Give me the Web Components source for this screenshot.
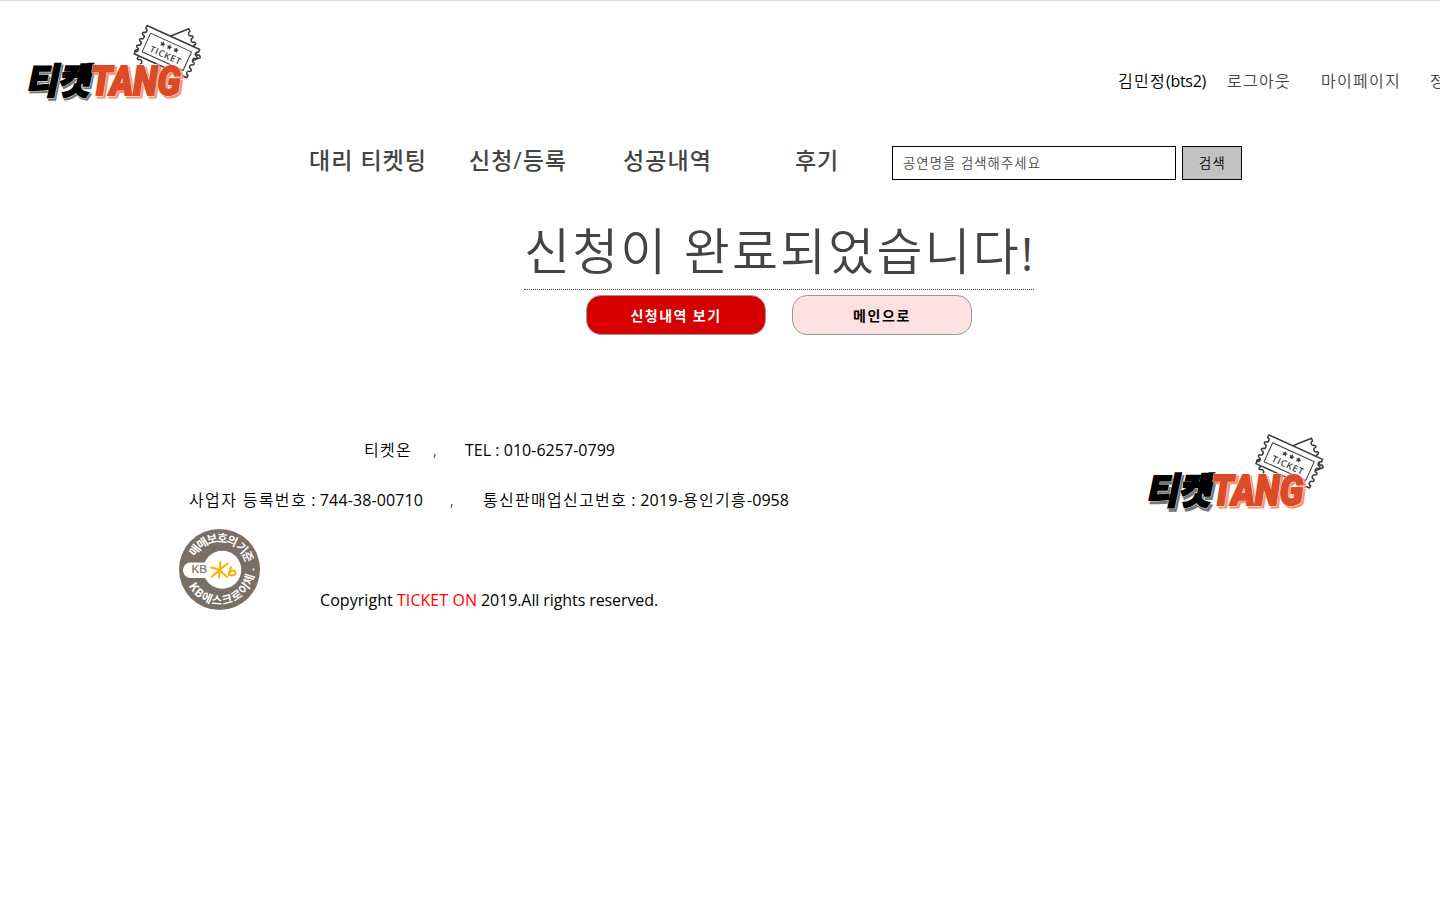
<!DOCTYPE html>
<html lang="ko"><head><meta charset="utf-8"><title>티켓TANG</title>
<style>
html,body{margin:0;background:#fff}
body{font-family:"Open Sans","Noto Sans CJK KR",sans-serif;height:898px;overflow:hidden}
</style></head><body>
<ticket-page></ticket-page>
<script>
const define=(name,html,setup)=>customElements.define(name,class extends HTMLElement{
  connectedCallback(){
    if(this.shadowRoot)return;
    const t=document.createElement('template');t.innerHTML=html;
    this.attachShadow({mode:'open'}).append(t.content.cloneNode(true));
    if(setup)setup(this);
  }
});

/* A line of text whose tracking is adjusted to fill the width in "w". */
define('text-run',`<style>:host{display:block;white-space:pre;line-height:24px;font-size:16px}span{display:inline-block}</style><span><slot></slot></span>`,el=>{
  const w=+el.getAttribute('w'),s=el.shadowRoot.querySelector('span');
  el.style.width=w+'px';
  s.style.letterSpacing=((w-s.getBoundingClientRect().width)/el.textContent.length)+'px';
});

define('tang-logo',`<style>:host{display:block;width:190px;height:95px}svg{display:block;width:100%;height:100%;overflow:visible}
.k{font:900 36px "Noto Sans CJK KR",sans-serif}.t{font:italic 900 41px Roboto,sans-serif}.s{font:600 9px "Open Sans",sans-serif}</style>
<svg viewBox="0 0 190 95">
<defs><path id="tk" d="M0 0H58V3a2.2 2.2 0 0 0 0 4.4q2 1.3 0 2.6a2.2 2.2 0 0 0 0 4.4q2 1.3 0 2.6a2.2 2.2 0 0 0 0 4.4q2 1.3 0 2.6a2.2 2.2 0 0 0 0 4.4V31H0V28.4a2.2 2.2 0 0 0 0-4.4q-2-1.3 0-2.6a2.2 2.2 0 0 0 0-4.4q-2-1.3 0-2.6a2.2 2.2 0 0 0 0-4.4q-2-1.3 0-2.6a2.2 2.2 0 0 0 0-4.4z"/></defs>
<g fill="#fff" stroke="#3b3b3b" stroke-width="1.5" stroke-linejoin="round">
<use href="#tk" transform="translate(115 35.5) rotate(-22)"/>
<g transform="translate(127 10.5) rotate(24.5)"><use href="#tk"/><path d="M6.5 5.5H51.5V26H6.5z" fill="none" stroke-width="1"/></g>
</g>
<g fill="#3b3b3b" transform="translate(127 10.5) rotate(24.5)"><text class="s" x="12.5" y="22.5" textLength="33">TICKET</text>
<path id="st" d="M22 7.600l.9 1.700 1.900.2-1.400 1.300.4 1.900-1.800-.9-1.800.9.4-1.900-1.400-1.300 1.900-.2z"/><use href="#st" x="7.300"/><use href="#st" x="14.600"/></g>
<g transform="translate(5.5 79) skewX(-12)">
<g class="k"><g fill="#777" stroke="#777" stroke-width="2.500" transform="translate(2 2)"><text textLength="64" lengthAdjust="spacingAndGlyphs">티켓</text></g>
<g stroke="#fff" stroke-width="2.500"><text textLength="64" lengthAdjust="spacingAndGlyphs">티켓</text></g><g stroke="#000" stroke-width="1.800"><text textLength="64" lengthAdjust="spacingAndGlyphs">티켓</text></g></g></g>
<g class="t" transform="translate(70.500 79.500)"><g fill="#fa9275" stroke="#fa9275" stroke-width="3" transform="translate(2 2.200)"><text textLength="90" lengthAdjust="spacingAndGlyphs">TANG</text></g>
<g stroke="#fff" fill="#fff" stroke-width="2.800"><text textLength="90" lengthAdjust="spacingAndGlyphs">TANG</text></g><g fill="#dc4b27" stroke="#dc4b27" stroke-width="2"><text textLength="90" lengthAdjust="spacingAndGlyphs">TANG</text></g></g>
</svg>`);

define('kb-badge',`<style>:host{display:block;width:81px;height:81px}svg{display:block}text{font-family:"Noto Sans CJK KR",sans-serif}</style>
<svg width="81" height="81" viewBox="9 9 81 81"><defs><path id="a" d="M25.400 37.200A27 27 0 0 1 76.500 48"/><path id="b" d="M18.600 65.900A35 35 0 0 0 84.500 52"/></defs>
<circle cx="49.5" cy="49.5" r="40.500" fill="#796f64"/><circle cx="52.300" cy="49.700" r="19" fill="#fff"/><rect x="13" y="42.500" width="42" height="15.500" rx="7.500" fill="#fff"/>
<g fill="#fff" font-size="11.500" font-weight="700"><text><textPath href="#a" textLength="66">매매보호의 기준</textPath></text><text><textPath href="#b" textLength="87">KB에스크로이체</textPath></text></g><circle cx="83.500" cy="49.500" r="1" fill="#fff"/>
<text x="21.500" y="53" font-size="10.500" fill="#796f64" stroke="#796f64" stroke-width=".2" textLength="15.500" lengthAdjust="spacingAndGlyphs" style="font-family:'Liberation Sans'">KB</text>
<g fill="none" stroke="#f9b000" stroke-width="2" stroke-linecap="round"><path d="M50.500 42L49 57.500M41.500 47.500L49.500 50L57.500 43.500M49.500 50L42 56.500M49.500 50L57 57M61 47L58.800 55"/><ellipse cx="62.300" cy="53" rx="3.200" ry="2.400" transform="rotate(-12 62.300 53)"/></g></svg>`);

define('site-header',`<style>:host{display:block;border-top:1px solid #d9d9d9}
.top{display:flex;height:109px}tang-logo{margin:14px 0 0 20px}.user{display:flex;margin:68px 0 0 908px;color:#444;font-weight:350;flex:none}.name{display:flex;color:#000;margin-right:21px;font-weight:400}.user :nth-child(2){margin-right:30px}.user :nth-child(3){margin-right:29px}.name text-run{margin:0!important}
tang-logo,text-run{flex:none}.nav{display:flex;margin:36px 0 0 309px}.nav text-run{font-size:23px;line-height:29px;color:#444;font-weight:500}
.in{box-sizing:border-box;width:284px;height:34px;border:1px solid #000;padding:4px 10px;color:#444}.btn{box-sizing:border-box;width:60px;height:34px;border:1px solid #000;background:#c2c2c2;margin-left:6px;padding:4px 16px}.in text-run,.btn text-run{font-size:13.300px;line-height:24px;font-weight:350;color:inherit}</style>
<div class="top"><tang-logo></tang-logo><div class="user"><div class="name"><text-run w="48" style="font-weight:350">김민정</text-run><text-run w="40">(bts2)</text-run></div><text-run w="64">로그아웃</text-run><text-run w="80">마이페이지</text-run><text-run w="32">정보</text-run></div></div>
<div class="nav"><text-run w="118">대리 티켓팅</text-run><text-run w="98" style="margin-left:42px">신청/등록</text-run><text-run w="89" style="margin-left:56px">성공내역</text-run><text-run w="44" style="margin-left:83px">후기</text-run>
<div class="in" style="margin-left:53px"><text-run w="138">공연명을 검색해주세요</text-run></div><div class="btn"><text-run w="27">검색</text-run></div></div>`);

define('pill-button',`<style>:host{display:flex;box-sizing:border-box;width:180px;height:40px;border:1px solid #999;border-radius:15px;justify-content:center;padding-top:8px;background:#ffe1e1;color:#000;font-weight:600}:host([primary]){background:#d60000;color:#fff}</style><slot></slot>`);

define('done-message',`<style>:host{display:block;margin:34px 0 0 524px;width:510px}.title{display:flex;border-bottom:1px dotted #444;height:75px}.title text-run{font-size:50px;line-height:74px;color:#444;font-weight:350}.title .mark{font-size:46px;font-weight:400;line-height:78px}.buttons{display:flex;gap:26px;margin:5px 0 0 62px}pill-button text-run{font-size:14px}</style>
<div class="title"><text-run w="497">신청이 완료되었습니다</text-run><text-run class="mark" w="13">!</text-run></div><div class="buttons"><pill-button primary><text-run w="91">신청내역 보기</text-run></pill-button><pill-button><text-run w="58">메인으로</text-run></pill-button></div>`);

define('site-footer',`<style>:host{display:flex;margin:90px 0 0 179px}.info{width:961px;padding-top:13px}.row{display:flex;height:50px}.bottom{display:flex;margin-top:-9px}.red{color:#f00}tang-logo{width:193px;height:97px;margin-top:-1px}.row{color:#000}.h{font-weight:350}</style>
<div class="info"><div class="row"><text-run class="h" w="48" style="margin-left:185px">티켓온</text-run><text-run class="h" w="5" style="margin-left:21px">,</text-run><text-run w="150" style="margin-left:27px">TEL : 010-6257-0799</text-run></div>
<div class="row"><text-run class="h" w="118" style="margin-left:10px">사업자 등록번호</text-run><text-run w="116"> : 744-38-00710</text-run><text-run class="h" w="5" style="margin-left:27px">,</text-run><text-run class="h" w="144" style="margin-left:28px">통신판매업신고번호</text-run><text-run w="56"> : 2019-</text-run><text-run class="h" w="64">용인기흥</text-run><text-run w="42">-0958</text-run></div>
<div class="bottom"><kb-badge></kb-badge><text-run w="77" style="margin:59px 0 0 60px">Copyright </text-run><text-run class="red" w="80" style="margin-top:59px">TICKET ON</text-run><text-run w="181" style="margin-top:59px"> 2019.All rights reserved.</text-run></div></div><tang-logo></tang-logo>`);

define('ticket-page',`<style>:host{display:block;width:1440px;height:898px;overflow:hidden}</style><site-header></site-header><done-message></done-message><site-footer></site-footer>`);
</script></body></html>
